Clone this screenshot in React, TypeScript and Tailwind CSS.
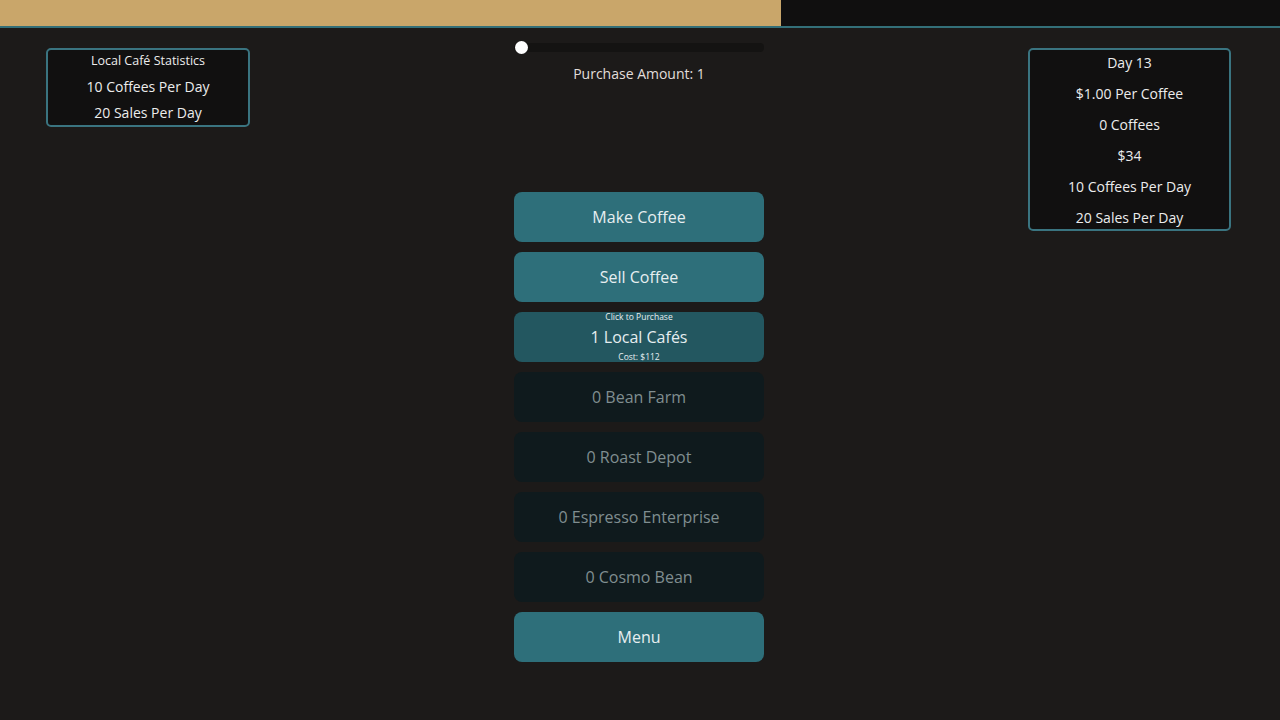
import React from "react";

const font = { fontFamily: '"Open Sans", "Noto Sans", sans-serif' };

function ActiveButton({ label }: { label: string }) {
  return (
    <div className="h-[50px] w-full rounded-lg bg-[#2e6f7a] flex items-center justify-center text-[16px] text-[#e6eef0]">
      {label}
    </div>
  );
}

function DisabledButton({ label }: { label: string }) {
  return (
    <div className="h-[50px] w-full rounded-lg bg-[#0f1a1d] flex items-center justify-center text-[16px] text-[#808e90]">
      {label}
    </div>
  );
}

export default function App() {
  return (
    <div className="w-[1280px] h-[720px] bg-[#1c1a19] overflow-hidden" style={font}>
      <div className="h-[28px] flex border-b-2 border-[#336f78] bg-[#100f0f]">
        <div className="w-[781px] h-full bg-[#c9a66a]" />
      </div>
      <div className="flex justify-between items-start pl-[46px] pr-[49px]">
        <div className="mt-[20px] w-[204px] h-[79px] rounded-[5px] border-2 border-[#3a7480] bg-[#111010] flex flex-col items-center text-[#ececec]">
          <div className="mt-[1px] text-[12.5px] leading-[20px] h-[20px]">Local Café Statistics</div>
          <div className="mt-[6px] text-[14px] leading-[20px] h-[20px]">10 Coffees Per Day</div>
          <div className="mt-[6px] text-[14px] leading-[20px] h-[20px]">20 Sales Per Day</div>
        </div>

        <div className="w-[250px] flex flex-col items-stretch">
          <div className="mt-[13px] h-[12px] relative flex items-center">
            <div className="w-full h-[9px] bg-[#141312] rounded-sm" />
            <div className="absolute left-[1px] top-0 w-[13px] h-[13px] rounded-full bg-white" />
          </div>
          <div className="mt-[11px] text-center text-[14px] leading-[20px] text-[#e2dedb]">Purchase Amount: 1</div>
          <div className="mt-[108px] flex flex-col gap-[10px]">
            <ActiveButton label="Make Coffee" />
            <ActiveButton label="Sell Coffee" />
            <div className="h-[50px] w-full rounded-lg bg-[#235760] flex flex-col items-center justify-center text-[#e6eef0]">
              <div className="text-[8.5px] leading-[10px]">Click to Purchase</div>
              <div className="text-[16px] leading-[24px] my-[3px]">1 Local Cafés</div>
              <div className="text-[8.5px] leading-[10px]">Cost: $112</div>
            </div>
            <DisabledButton label="0 Bean Farm" />
            <DisabledButton label="0 Roast Depot" />
            <DisabledButton label="0 Espresso Enterprise" />
            <DisabledButton label="0 Cosmo Bean" />
            <ActiveButton label="Menu" />
          </div>
        </div>

        <div className="mt-[20px] w-[203px] h-[183px] rounded-[5px] border-2 border-[#3a7480] bg-[#111010] flex flex-col items-center gap-[7px] pt-[1px] text-[14px] leading-[24px] text-[#ececec]">
          <div>Day 13</div>
          <div>$1.00 Per Coffee</div>
          <div>0 Coffees</div>
          <div>$34</div>
          <div>10 Coffees Per Day</div>
          <div>20 Sales Per Day</div>
        </div>
      </div>
    </div>
  );
}
